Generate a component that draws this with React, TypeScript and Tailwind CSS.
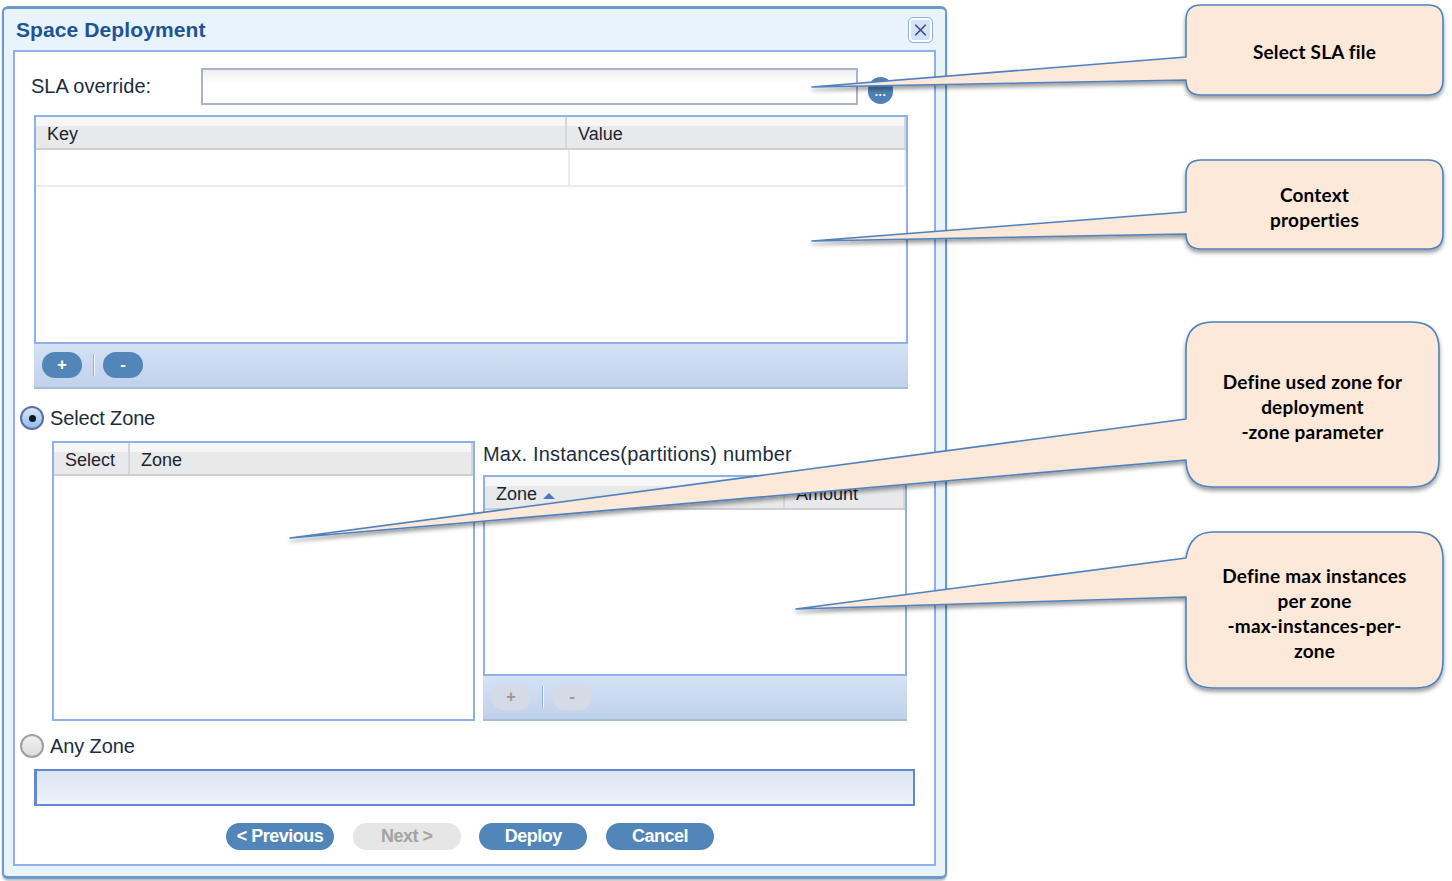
import React from 'react';
import { X } from 'lucide-react';

const fontUi = 'font-["Liberation_Sans",sans-serif]';

const callouts = [
  {
    d: 'M1186 20 Q1186 5 1201 5 L1428 5 Q1443 5 1443 20 L1443 80 Q1443 95 1428 95 L1201 95 Q1186 95 1186 80 L812 87 L1186 57 Z',
    lines: ['Select SLA file'],
    box: 'left-[1186px] top-[5px] w-[257px] h-[92px]',
  },
  {
    d: 'M1186 175 Q1186 160 1201 160 L1428 160 Q1443 160 1443 175 L1443 234 Q1443 249 1428 249 L1201 249 Q1186 249 1186 234 L812 241 L1186 212 Z',
    lines: ['Context', 'properties'],
    box: 'left-[1186px] top-[160px] w-[257px] h-[93px]',
  },
  {
    d: 'M1186 349 Q1186 322 1213 322 L1412 322 Q1439 322 1439 349 L1439 460 Q1439 487 1412 487 L1213 487 Q1186 487 1186 460 L290 538 L1186 419 Z',
    lines: ['Define used zone for', 'deployment', '-zone parameter'],
    box: 'left-[1186px] top-[322px] w-[253px] h-[168px]',
  },
  {
    d: 'M1186 558 Q1190 532 1213 532 L1416 532 Q1443 532 1443 559 L1443 661 Q1443 688 1416 688 L1213 688 Q1186 688 1186 661 L1186 597 L796 609 L1186 558 Z',
    lines: ['Define max instances', 'per zone', '-max-instances-per-', 'zone'],
    box: 'left-[1186px] top-[532px] w-[257px] h-[161px]',
  },
];

const HeaderCell = ({ label, className }: { label: React.ReactNode; className: string }) => (
  <div className={`flex items-center h-full pl-[11px] pt-[4px] border-r-2 border-[#d6d6d8] bg-gradient-to-b from-[#f6f6f6] from-30% to-[#e8e9eb] to-30% text-[18px] text-[#1c2430] ${className}`}>
    {label}
  </div>
);

const PillSmall = ({ label, disabled }: { label: string; disabled?: boolean }) => (
  <div
    className={`w-[40px] h-[26px] rounded-full flex items-center justify-center font-bold text-[17px] leading-none ${
      disabled ? 'bg-[#d5dbe6] text-[#9a9a9a]' : 'bg-[#5285b8] text-white'
    }`}
  >
    {label}
  </div>
);

const Toolbar = ({ disabled }: { disabled?: boolean }) => (
  <div className="h-[45px] flex items-center pl-[8px] pb-[2px] bg-gradient-to-b from-[#d5e2f5] to-[#c0d1eb] border-b-2 border-[#a5bcdc]">
    <PillSmall label="+" disabled={disabled} />
    <div className="w-[2px] h-[22px] bg-[#f2f7ff] border-l border-[#8fb0e8] ml-[11px] mr-[8px]" />
    <PillSmall label="-" disabled={disabled} />
  </div>
);

const Radio = ({ checked }: { checked?: boolean }) => (
  <div
    className={`w-[24px] h-[24px] rounded-full border-2 flex items-center justify-center ${
      checked
        ? 'border-[#5f6f9c] bg-gradient-to-b from-[#d7e6f8] to-[#8fbcf0]'
        : 'border-[#a0a0a0] bg-gradient-to-b from-[#f0f0f0] to-[#dcdcdc]'
    }`}
  >
    {checked && <div className="w-[7px] h-[7px] rounded-full bg-[#101828]" />}
  </div>
);

const ActionButton = ({ label, disabled }: { label: string; disabled?: boolean }) => (
  <div
    className={`w-[108px] h-[27px] rounded-full flex items-center justify-center font-bold text-[18px] tracking-[-0.5px] ${
      disabled ? 'bg-[#e6e6e6] text-[#a3a3a3]' : 'bg-[#5285b8] text-white'
    }`}
  >
    {label}
  </div>
);

const App = () => {
  return (
    <div className={`relative w-[1452px] h-[881px] overflow-hidden bg-white ${fontUi}`}>
      {/* Dialog */}
      <div className="ml-[2px] pt-[6px]">
        <div className="w-[945px] h-[873px] flex flex-col bg-[#e8f3fb] border-x-2 border-t-[3px] border-b-[3px] border-[#6b9bcd] rounded-[6px] shadow-[0_2px_2px_rgba(0,0,0,0.25)]">
          <div className="h-[41px] flex items-center justify-between pl-[12px] pr-[13px] shrink-0">
            <span className="font-bold text-[21px] text-[#1f5396] tracking-[0.1px]">Space Deployment</span>
            <div className="w-[23px] h-[24px] rounded-[4px] border-2 border-white outline outline-1 outline-[#8fb0e8] bg-[#d3e2f6] flex items-center justify-center">
              <X className="w-[20px] h-[20px] text-[#3a4f9c]" strokeWidth={2.2} />
            </div>
          </div>

          <div className="ml-[9px] w-[923px] h-[816px] bg-white border-2 border-[#8fb0e8] flex flex-col">
            {/* SLA override */}
            <div className="mt-[16px] h-[37px] flex items-center shrink-0">
              <span className="ml-[16px] w-[170px] pb-[2px] text-[20px] text-[#1c2d40]">SLA override:</span>
              <div className="w-[657px] h-[37px] border-2 border-[#adb2cc] bg-gradient-to-b from-[#eeeeee] from-0% to-white to-40%" />
              <div className="ml-[10px] mt-[7px] w-[25px] h-[27px] rounded-full bg-[#4f81b5] flex items-end justify-center pb-[6px] text-white text-[12px] font-bold leading-none tracking-[0.5px]">
                ...
              </div>
            </div>

            {/* Key / value table */}
            <div className="ml-[19px] mt-[10px] w-[874px] shrink-0">
              <div className="h-[229px] border-2 border-[#8fb0e8]">
                <div className="h-[33px] flex border-b-2 border-[#cfcfd2]">
                  <HeaderCell label="Key" className="w-[531px]" />
                  <HeaderCell label="Value" className="flex-1" />
                </div>
                <div className="h-[37px] flex border-b-2 border-[#ececec]">
                  <div className="w-[534px] border-r-2 border-[#ececec]" />
                  <div className="flex-1 border-r-2 border-[#ececec]" />
                </div>
              </div>
              <Toolbar />
            </div>

            {/* Select zone */}
            <div className="ml-[5px] mt-[17px] h-[24px] flex items-center gap-[6px] shrink-0">
              <Radio checked />
              <span className="text-[20px] text-[#1c2d40] tracking-[-0.15px]">Select Zone</span>
            </div>

            <div className="mt-[11px] ml-[37px] flex gap-[8px] h-[280px] shrink-0">
              <div className="w-[423px] h-[280px] border-2 border-[#8fb0e8]">
                <div className="h-[33px] flex border-b-2 border-[#cfcfd2]">
                  <HeaderCell label="Select" className="w-[76px]" />
                  <HeaderCell label="Zone" className="flex-1" />
                </div>
              </div>
              <div className="w-[424px] flex flex-col">
                <div className="h-[34px] flex items-center pb-[8px] text-[20px] text-[#1c2d40] tracking-[0.2px]">
                  Max. Instances(partitions) number
                </div>
                <div className="h-[202px] border-2 border-[#8fb0e8]">
                  <div className="h-[33px] flex border-b-2 border-[#cfcfd2]">
                    <HeaderCell
                      className="w-[300px]"
                      label={
                        <>
                          Zone
                          <span className="ml-[6px] mt-[3px] w-0 h-0 border-x-[6px] border-x-transparent border-b-[6px] border-b-[#4f74c0]" />
                        </>
                      }
                    />
                    <HeaderCell label="Amount" className="flex-1" />
                  </div>
                </div>
                <Toolbar disabled />
              </div>
            </div>

            {/* Any zone */}
            <div className="ml-[5px] mt-[13px] h-[24px] flex items-center gap-[6px] shrink-0">
              <Radio />
              <span className="text-[20px] text-[#1c2d40] tracking-[-0.1px]">Any Zone</span>
            </div>

            <div className="ml-[19px] mt-[11px] w-[881px] h-[37px] shrink-0 border-2 border-l-[3px] border-[#6288d2] bg-gradient-to-b from-[#dce5f3] to-[#eef2fa]" />

            {/* Footer buttons */}
            <div className="ml-[211px] mt-[17px] flex gap-[18.7px] shrink-0">
              <ActionButton label="< Previous" />
              <ActionButton label="Next >" disabled />
              <ActionButton label="Deploy" />
              <ActionButton label="Cancel" />
            </div>
          </div>
        </div>
      </div>

      {/* Callouts lie over the dialog */}
      <svg className="absolute left-0 top-0 w-[1452px] h-[881px]" viewBox="0 0 1452 881" fill="none">
        <defs>
          <filter id="calloutShadow" x="-5%" y="-10%" width="110%" height="125%">
            <feDropShadow dx="0" dy="3" stdDeviation="2" floodColor="#000000" floodOpacity="0.4" />
          </filter>
        </defs>
        {callouts.map((c, i) => (
          <path key={i} d={c.d} fill="#fce9da" stroke="#4f81bd" strokeWidth="1.6" strokeLinejoin="round" filter="url(#calloutShadow)" />
        ))}
      </svg>
      {callouts.map((c, i) => (
        <div
          key={i}
          className={`absolute ${c.box} flex flex-col items-center justify-center font-["Lato",sans-serif] font-bold text-[19px] leading-[25px] tracking-[0.2px] text-black`}
        >
          {c.lines.map((line) => (
            <span key={line}>{line}</span>
          ))}
        </div>
      ))}
    </div>
  );
};

export default App;
